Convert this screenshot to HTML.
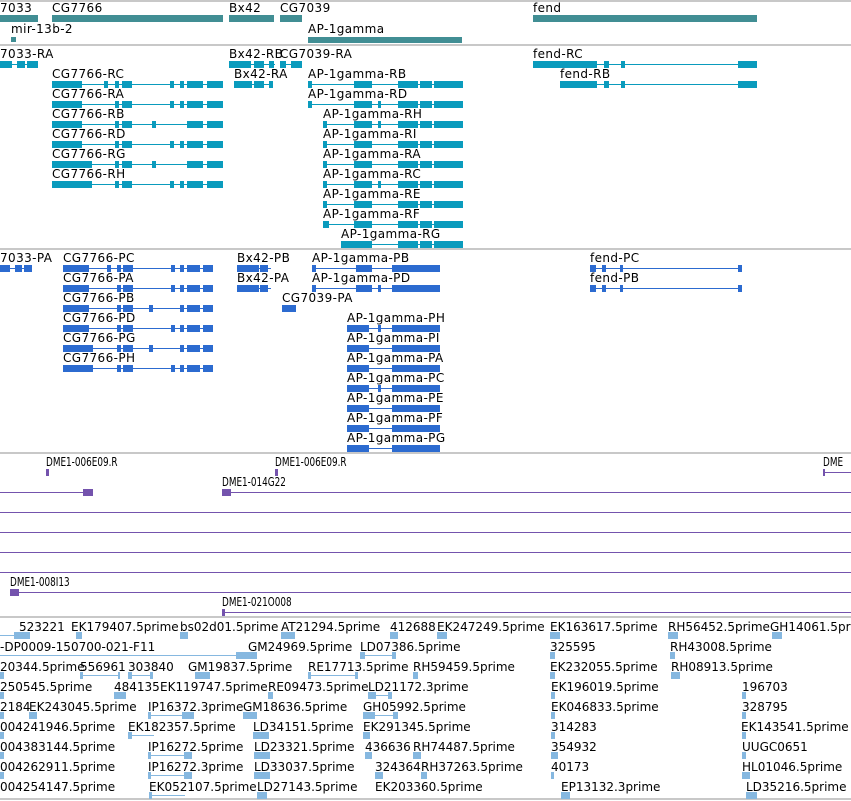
<!DOCTYPE html>
<html><head><meta charset="utf-8"><style>
*{margin:0;padding:0}
html{overflow:hidden;width:851px;height:801px}
body{width:851px;height:801px;background:#fff;position:relative;overflow:hidden;font-family:"DejaVu Sans","Liberation Sans",sans-serif;font-size:12px;color:#000}
div{position:absolute}
.w{left:0;top:0;width:851px;height:801px;overflow:hidden}
.s{left:0;width:851px;height:2px;background:#c8c8c8}
.l{white-space:nowrap;line-height:14px}
.t .l{letter-spacing:0.4px}
.d{white-space:nowrap;line-height:14px;font-family:"DejaVu Sans Condensed","DejaVu Sans",sans-serif;font-size:12px;transform:scaleX(.82);transform-origin:0 0}
.a,.b,.c,.p,.e{height:1px}
.a{background:#0a9bbd}.b{background:#2c6bd0}.p{background:#7453ad}.e{background:#86b8e0}
.a i,.b i,.e i,.p i{position:absolute;top:-3px;height:7px;display:block}
.a i{background:#0a9bbd}.b i{background:#2c6bd0}.e i{background:#86b8e0}.p i{background:#7453ad}
.g{background:#418e94;height:7px}
</style></head><body>
<div class="w">
<div class="s" style="top:0"></div>
<div class="s" style="top:44px"></div>
<div class="s" style="top:248px"></div>
<div class="s" style="top:452px"></div>
<div class="s" style="top:616px"></div>
<div class="s" style="top:798px"></div>

<div class="t w">
<!-- genes -->
<div class="l" style="left:0;top:1px">7033</div><div class="g" style="left:0;top:15px;width:38px"></div>
<div class="l" style="left:52px;top:1px">CG7766</div><div class="g" style="left:52px;top:15px;width:171px"></div>
<div class="l" style="left:229px;top:1px">Bx42</div><div class="g" style="left:229px;top:15px;width:45px"></div>
<div class="l" style="left:280px;top:1px">CG7039</div><div class="g" style="left:280px;top:15px;width:22px"></div>
<div class="l" style="left:533px;top:1px">fend</div><div class="g" style="left:533px;top:15px;width:224px"></div>
<div class="l" style="left:11px;top:22px">mir-13b-2</div><div class="g" style="left:11px;top:37px;width:5px;height:5px"></div>
<div class="l" style="left:308px;top:22px">AP-1gamma</div><div class="g" style="left:308px;top:37px;width:154px;height:6px"></div>

<!-- transcripts R -->
<div class="l" style="left:0;top:47px">7033-RA</div><div class="a" style="left:0;top:64px;width:38px"><i style="left:0;width:12px"></i><i style="left:17px;width:8px"></i><i style="left:27px;width:11px"></i></div>
<div class="l" style="left:229px;top:47px">Bx42-RB</div><div class="a" style="left:229px;top:64px;width:46px"><i style="left:0;width:22px"></i><i style="left:25px;width:10px"></i><i style="left:40px;width:5px"></i></div>
<div class="l" style="left:280px;top:47px">CG7039-RA</div><div class="a" style="left:280px;top:64px;width:22px"><i style="left:0;width:6px"></i><i style="left:11px;width:11px"></i></div>
<div class="l" style="left:533px;top:47px">fend-RC</div><div class="a" style="left:533px;top:64px;width:224px"><i style="left:0;width:64px"></i><i style="left:71px;width:5px"></i><i style="left:88px;width:4px"></i><i style="left:205px;width:19px"></i></div>
<div class="l" style="left:560px;top:67px">fend-RB</div><div class="a" style="left:560px;top:84px;width:197px"><i style="left:0;width:37px"></i><i style="left:44px;width:5px"></i><i style="left:61px;width:4px"></i><i style="left:178px;width:19px"></i></div>
<div class="l" style="left:234px;top:67px">Bx42-RA</div><div class="a" style="left:234px;top:84px;width:39px"><i style="left:0;width:18px"></i><i style="left:20px;width:10px"></i><i style="left:35px;width:4px"></i></div>

<div class="l" style="left:52px;top:67px">CG7766-RC</div><div class="a" style="left:52px;top:84px;width:171px"><i style="left:0;width:30px"></i><i style="left:52px;width:4px"></i><i style="left:63px;width:4px"></i><i style="left:70px;width:10px"></i><i style="left:118px;width:4px"></i><i style="left:128px;width:4px"></i><i style="left:135px;width:16px"></i><i style="left:155px;width:16px"></i></div>
<div class="l" style="left:52px;top:87px">CG7766-RA</div><div class="a" style="left:52px;top:104px;width:171px"><i style="left:0;width:30px"></i><i style="left:63px;width:4px"></i><i style="left:70px;width:10px"></i><i style="left:118px;width:4px"></i><i style="left:128px;width:4px"></i><i style="left:135px;width:16px"></i><i style="left:155px;width:16px"></i></div>
<div class="l" style="left:52px;top:107px">CG7766-RB</div><div class="a" style="left:52px;top:124px;width:171px"><i style="left:0;width:30px"></i><i style="left:63px;width:4px"></i><i style="left:70px;width:10px"></i><i style="left:100px;width:4px"></i><i style="left:135px;width:16px"></i><i style="left:155px;width:16px"></i></div>
<div class="l" style="left:52px;top:127px">CG7766-RD</div><div class="a" style="left:52px;top:144px;width:171px"><i style="left:0;width:30px"></i><i style="left:63px;width:4px"></i><i style="left:70px;width:10px"></i><i style="left:118px;width:4px"></i><i style="left:128px;width:4px"></i><i style="left:135px;width:16px"></i><i style="left:155px;width:16px"></i></div>
<div class="l" style="left:52px;top:147px">CG7766-RG</div><div class="a" style="left:52px;top:164px;width:171px"><i style="left:0;width:40px"></i><i style="left:63px;width:4px"></i><i style="left:70px;width:10px"></i><i style="left:100px;width:4px"></i><i style="left:135px;width:16px"></i><i style="left:155px;width:16px"></i></div>
<div class="l" style="left:52px;top:167px">CG7766-RH</div><div class="a" style="left:52px;top:184px;width:171px"><i style="left:0;width:40px"></i><i style="left:63px;width:4px"></i><i style="left:70px;width:10px"></i><i style="left:118px;width:4px"></i><i style="left:128px;width:4px"></i><i style="left:135px;width:16px"></i><i style="left:155px;width:16px"></i></div>

<div class="l" style="left:308px;top:67px">AP-1gamma-RB</div><div class="a" style="left:308px;top:84px;width:155px"><i style="left:0;width:4px"></i><i style="left:46px;width:18px"></i><i style="left:90px;width:20px"></i><i style="left:112px;width:12px"></i><i style="left:126px;width:29px"></i></div>
<div class="l" style="left:308px;top:87px">AP-1gamma-RD</div><div class="a" style="left:308px;top:104px;width:155px"><i style="left:0;width:4px"></i><i style="left:46px;width:18px"></i><i style="left:70px;width:3px"></i><i style="left:90px;width:20px"></i><i style="left:112px;width:12px"></i><i style="left:126px;width:29px"></i></div>
<div class="l" style="left:323px;top:107px">AP-1gamma-RH</div><div class="a" style="left:323px;top:124px;width:140px"><i style="left:0;width:4px"></i><i style="left:31px;width:18px"></i><i style="left:55px;width:3px"></i><i style="left:75px;width:20px"></i><i style="left:97px;width:12px"></i><i style="left:111px;width:29px"></i></div>
<div class="l" style="left:323px;top:127px">AP-1gamma-RI</div><div class="a" style="left:323px;top:144px;width:140px"><i style="left:0;width:4px"></i><i style="left:31px;width:18px"></i><i style="left:75px;width:20px"></i><i style="left:97px;width:12px"></i><i style="left:111px;width:29px"></i></div>
<div class="l" style="left:323px;top:147px">AP-1gamma-RA</div><div class="a" style="left:323px;top:164px;width:140px"><i style="left:0;width:4px"></i><i style="left:31px;width:18px"></i><i style="left:75px;width:20px"></i><i style="left:97px;width:12px"></i><i style="left:111px;width:29px"></i></div>
<div class="l" style="left:323px;top:167px">AP-1gamma-RC</div><div class="a" style="left:323px;top:184px;width:140px"><i style="left:0;width:4px"></i><i style="left:31px;width:18px"></i><i style="left:55px;width:3px"></i><i style="left:75px;width:20px"></i><i style="left:97px;width:12px"></i><i style="left:111px;width:29px"></i></div>
<div class="l" style="left:323px;top:187px">AP-1gamma-RE</div><div class="a" style="left:323px;top:204px;width:140px"><i style="left:0;width:4px"></i><i style="left:31px;width:18px"></i><i style="left:75px;width:20px"></i><i style="left:97px;width:12px"></i><i style="left:111px;width:29px"></i></div>
<div class="l" style="left:323px;top:207px">AP-1gamma-RF</div><div class="a" style="left:323px;top:224px;width:140px"><i style="left:0;width:6px"></i><i style="left:31px;width:18px"></i><i style="left:75px;width:20px"></i><i style="left:97px;width:12px"></i><i style="left:111px;width:29px"></i></div>
<div class="l" style="left:341px;top:227px">AP-1gamma-RG</div><div class="a" style="left:341px;top:244px;width:122px"><i style="left:0;width:31px"></i><i style="left:57px;width:20px"></i><i style="left:79px;width:12px"></i><i style="left:93px;width:29px"></i></div>

<!-- transcripts P -->
<div class="l" style="left:0;top:251px">7033-PA</div><div class="b" style="left:0;top:268px;width:32px"><i style="left:0;width:10px"></i><i style="left:15px;width:7px"></i><i style="left:24px;width:8px"></i></div>
<div class="l" style="left:237px;top:251px">Bx42-PB</div><div class="b" style="left:237px;top:268px;width:34px"><i style="left:0;width:22px"></i><i style="left:23px;width:8px"></i></div>
<div class="l" style="left:237px;top:271px">Bx42-PA</div><div class="b" style="left:237px;top:288px;width:34px"><i style="left:0;width:22px"></i><i style="left:23px;width:8px"></i></div>
<div class="l" style="left:282px;top:291px">CG7039-PA</div><div class="b" style="left:282px;top:308px;width:14px"><i style="left:0;width:14px"></i></div>
<div class="l" style="left:590px;top:251px">fend-PC</div><div class="b" style="left:590px;top:268px;width:152px"><i style="left:0;width:6px"></i><i style="left:12px;width:4px"></i><i style="left:30px;width:3px"></i><i style="left:148px;width:4px"></i></div>
<div class="l" style="left:590px;top:271px">fend-PB</div><div class="b" style="left:590px;top:288px;width:152px"><i style="left:0;width:6px"></i><i style="left:12px;width:4px"></i><i style="left:30px;width:3px"></i><i style="left:148px;width:4px"></i></div>

<div class="l" style="left:63px;top:251px">CG7766-PC</div><div class="b" style="left:63px;top:268px;width:150px"><i style="left:0;width:26px"></i><i style="left:44px;width:4px"></i><i style="left:54px;width:4px"></i><i style="left:60px;width:10px"></i><i style="left:108px;width:4px"></i><i style="left:117px;width:4px"></i><i style="left:124px;width:13px"></i><i style="left:140px;width:10px"></i></div>
<div class="l" style="left:63px;top:271px">CG7766-PA</div><div class="b" style="left:63px;top:288px;width:150px"><i style="left:0;width:26px"></i><i style="left:54px;width:4px"></i><i style="left:60px;width:10px"></i><i style="left:108px;width:4px"></i><i style="left:117px;width:4px"></i><i style="left:124px;width:13px"></i><i style="left:140px;width:10px"></i></div>
<div class="l" style="left:63px;top:291px">CG7766-PB</div><div class="b" style="left:63px;top:308px;width:150px"><i style="left:0;width:26px"></i><i style="left:54px;width:4px"></i><i style="left:60px;width:10px"></i><i style="left:86px;width:4px"></i><i style="left:117px;width:4px"></i><i style="left:124px;width:13px"></i><i style="left:140px;width:10px"></i></div>
<div class="l" style="left:63px;top:311px">CG7766-PD</div><div class="b" style="left:63px;top:328px;width:150px"><i style="left:0;width:26px"></i><i style="left:54px;width:4px"></i><i style="left:60px;width:10px"></i><i style="left:108px;width:4px"></i><i style="left:117px;width:4px"></i><i style="left:124px;width:13px"></i><i style="left:140px;width:10px"></i></div>
<div class="l" style="left:63px;top:331px">CG7766-PG</div><div class="b" style="left:63px;top:348px;width:150px"><i style="left:0;width:30px"></i><i style="left:54px;width:4px"></i><i style="left:60px;width:10px"></i><i style="left:86px;width:4px"></i><i style="left:117px;width:4px"></i><i style="left:124px;width:13px"></i><i style="left:140px;width:10px"></i></div>
<div class="l" style="left:63px;top:351px">CG7766-PH</div><div class="b" style="left:63px;top:368px;width:150px"><i style="left:0;width:30px"></i><i style="left:54px;width:4px"></i><i style="left:60px;width:10px"></i><i style="left:108px;width:4px"></i><i style="left:117px;width:4px"></i><i style="left:124px;width:13px"></i><i style="left:140px;width:10px"></i></div>

<div class="l" style="left:312px;top:251px">AP-1gamma-PB</div><div class="b" style="left:312px;top:268px;width:128px"><i style="left:0;width:4px"></i><i style="left:44px;width:16px"></i><i style="left:80px;width:48px"></i></div>
<div class="l" style="left:312px;top:271px">AP-1gamma-PD</div><div class="b" style="left:312px;top:288px;width:128px"><i style="left:0;width:4px"></i><i style="left:44px;width:16px"></i><i style="left:66px;width:3px"></i><i style="left:80px;width:48px"></i></div>
<div class="l" style="left:347px;top:311px">AP-1gamma-PH</div><div class="b" style="left:347px;top:328px;width:93px"><i style="left:0;width:22px"></i><i style="left:31px;width:3px"></i><i style="left:45px;width:48px"></i></div>
<div class="l" style="left:347px;top:331px">AP-1gamma-PI</div><div class="b" style="left:347px;top:348px;width:93px"><i style="left:0;width:22px"></i><i style="left:45px;width:48px"></i></div>
<div class="l" style="left:347px;top:351px">AP-1gamma-PA</div><div class="b" style="left:347px;top:368px;width:93px"><i style="left:0;width:22px"></i><i style="left:45px;width:48px"></i></div>
<div class="l" style="left:347px;top:371px">AP-1gamma-PC</div><div class="b" style="left:347px;top:388px;width:93px"><i style="left:0;width:22px"></i><i style="left:31px;width:3px"></i><i style="left:45px;width:48px"></i></div>
<div class="l" style="left:347px;top:391px">AP-1gamma-PE</div><div class="b" style="left:347px;top:408px;width:93px"><i style="left:0;width:22px"></i><i style="left:45px;width:48px"></i></div>
<div class="l" style="left:347px;top:411px">AP-1gamma-PF</div><div class="b" style="left:347px;top:428px;width:93px"><i style="left:0;width:22px"></i><i style="left:45px;width:48px"></i></div>
<div class="l" style="left:347px;top:431px">AP-1gamma-PG</div><div class="b" style="left:347px;top:448px;width:93px"><i style="left:0;width:22px"></i><i style="left:45px;width:48px"></i></div>
</div>

<!-- DME -->
<div class="d" style="left:46px;top:455px">DME1-006E09.R</div><div class="p" style="left:46px;top:472px;width:3px"><i style="left:0;width:3px"></i></div>
<div class="d" style="left:275px;top:455px">DME1-006E09.R</div><div class="p" style="left:275px;top:472px;width:3px"><i style="left:0;width:3px"></i></div>
<div class="d" style="left:823px;top:455px">DME</div><div class="p" style="left:823px;top:472px;width:28px"><i style="left:0;width:2px"></i></div>
<div class="p" style="left:0;top:492px;width:93px"><i style="left:83px;width:10px"></i></div>
<div class="d" style="left:222px;top:475px">DME1-014G22</div><div class="p" style="left:222px;top:492px;width:629px"><i style="left:0;width:9px"></i></div>
<div class="p" style="left:0;top:512px;width:851px"></div>
<div class="p" style="left:0;top:532px;width:851px"></div>
<div class="p" style="left:0;top:552px;width:851px"></div>
<div class="p" style="left:0;top:572px;width:851px"></div>
<div class="d" style="left:10px;top:575px">DME1-008I13</div><div class="p" style="left:10px;top:592px;width:841px"><i style="left:0;width:9px"></i></div>
<div class="d" style="left:222px;top:595px">DME1-021O008</div><div class="p" style="left:222px;top:612px;width:629px"><i style="left:0;width:3px"></i></div>

<!-- ESTs -->
<div class="l" style="left:19px;top:620px">523221</div>
<div class="l" style="left:71px;top:620px">EK179407.5prime</div>
<div class="l" style="left:180px;top:620px">bs02d01.5prime</div>
<div class="l" style="left:281px;top:620px">AT21294.5prime</div>
<div class="l" style="left:390px;top:620px">412688</div>
<div class="l" style="left:437px;top:620px">EK247249.5prime</div>
<div class="l" style="left:550px;top:620px">EK163617.5prime</div>
<div class="l" style="left:668px;top:620px">RH56452.5prime</div>
<div class="l" style="left:770px;top:620px">GH14061.5prime</div>
<div class="l" style="left:0;top:640px">-DP0009-150700-021-F11</div>
<div class="l" style="left:248px;top:640px">GM24969.5prime</div>
<div class="l" style="left:360px;top:640px">LD07386.5prime</div>
<div class="l" style="left:550px;top:640px">325595</div>
<div class="l" style="left:670px;top:640px">RH43008.5prime</div>
<div class="l" style="left:0;top:660px">20344.5prime</div>
<div class="l" style="left:80px;top:660px">556961</div>
<div class="l" style="left:128px;top:660px">303840</div>
<div class="l" style="left:188px;top:660px">GM19837.5prime</div>
<div class="l" style="left:308px;top:660px">RE17713.5prime</div>
<div class="l" style="left:413px;top:660px">RH59459.5prime</div>
<div class="l" style="left:550px;top:660px">EK232055.5prime</div>
<div class="l" style="left:671px;top:660px">RH08913.5prime</div>
<div class="l" style="left:0;top:680px">250545.5prime</div>
<div class="l" style="left:114px;top:680px">484135</div>
<div class="l" style="left:160px;top:680px">EK119747.5prime</div>
<div class="l" style="left:268px;top:680px">RE09473.5prime</div>
<div class="l" style="left:368px;top:680px">LD21172.3prime</div>
<div class="l" style="left:551px;top:680px">EK196019.5prime</div>
<div class="l" style="left:742px;top:680px">196703</div>
<div class="l" style="left:0;top:700px">2184</div>
<div class="l" style="left:29px;top:700px">EK243045.5prime</div>
<div class="l" style="left:148px;top:700px">IP16372.3prime</div>
<div class="l" style="left:243px;top:700px">GM18636.5prime</div>
<div class="l" style="left:363px;top:700px">GH05992.5prime</div>
<div class="l" style="left:551px;top:700px">EK046833.5prime</div>
<div class="l" style="left:742px;top:700px">328795</div>
<div class="l" style="left:0;top:720px">004241946.5prime</div>
<div class="l" style="left:128px;top:720px">EK182357.5prime</div>
<div class="l" style="left:253px;top:720px">LD34151.5prime</div>
<div class="l" style="left:363px;top:720px">EK291345.5prime</div>
<div class="l" style="left:551px;top:720px">314283</div>
<div class="l" style="left:741px;top:720px">EK143541.5prime</div>
<div class="l" style="left:0;top:740px">004383144.5prime</div>
<div class="l" style="left:148px;top:740px">IP16272.5prime</div>
<div class="l" style="left:254px;top:740px">LD23321.5prime</div>
<div class="l" style="left:365px;top:740px">436636</div>
<div class="l" style="left:413px;top:740px">RH74487.5prime</div>
<div class="l" style="left:551px;top:740px">354932</div>
<div class="l" style="left:742px;top:740px">UUGC0651</div>
<div class="l" style="left:0;top:760px">004262911.5prime</div>
<div class="l" style="left:148px;top:760px">IP16272.3prime</div>
<div class="l" style="left:254px;top:760px">LD33037.5prime</div>
<div class="l" style="left:375px;top:760px">324364</div>
<div class="l" style="left:421px;top:760px">RH37263.5prime</div>
<div class="l" style="left:551px;top:760px">40173</div>
<div class="l" style="left:742px;top:760px">HL01046.5prime</div>
<div class="l" style="left:0;top:780px">004254147.5prime</div>
<div class="l" style="left:149px;top:780px">EK052107.5prime</div>
<div class="l" style="left:257px;top:780px">LD27143.5prime</div>
<div class="l" style="left:375px;top:780px">EK203360.5prime</div>
<div class="l" style="left:561px;top:780px">EP13132.3prime</div>
<div class="l" style="left:746px;top:780px">LD35216.5prime</div>

<!-- EST glyphs -->
<div class="e" style="left:0;top:635px;width:30px"><i style="left:14px;width:16px"></i></div>
<div class="e" style="left:76px;top:635px;width:6px"><i style="left:0;width:6px"></i></div>
<div class="e" style="left:180px;top:635px;width:8px"><i style="left:0;width:8px"></i></div>
<div class="e" style="left:281px;top:635px;width:14px"><i style="left:0;width:14px"></i></div>
<div class="e" style="left:390px;top:635px;width:8px"><i style="left:0;width:8px"></i></div>
<div class="e" style="left:437px;top:635px;width:10px"><i style="left:0;width:10px"></i></div>
<div class="e" style="left:550px;top:635px;width:10px"><i style="left:0;width:10px"></i></div>
<div class="e" style="left:668px;top:635px;width:10px"><i style="left:0;width:10px"></i></div>
<div class="e" style="left:772px;top:635px;width:10px"><i style="left:0;width:10px"></i></div>
<div class="e" style="left:0;top:655px;width:257px"><i style="left:236px;width:21px"></i></div>
<div class="e" style="left:360px;top:655px;width:36px"><i style="left:0;width:5px"></i><i style="left:32px;width:4px"></i></div>
<div class="e" style="left:550px;top:655px;width:5px"><i style="left:0;width:5px"></i></div>
<div class="e" style="left:670px;top:655px;width:5px"><i style="left:0;width:5px"></i></div>
<div class="e" style="left:0;top:675px;width:4px"><i style="left:0;width:4px"></i></div>
<div class="e" style="left:80px;top:675px;width:40px"><i style="left:0;width:3px"></i><i style="left:38px;width:2px"></i></div>
<div class="e" style="left:128px;top:675px;width:25px"><i style="left:0;width:4px"></i><i style="left:22px;width:3px"></i></div>
<div class="e" style="left:195px;top:675px;width:15px"><i style="left:0;width:15px"></i></div>
<div class="e" style="left:308px;top:675px;width:50px"><i style="left:0;width:3px"></i><i style="left:47px;width:3px"></i></div>
<div class="e" style="left:413px;top:675px;width:5px"><i style="left:0;width:5px"></i></div>
<div class="e" style="left:550px;top:675px;width:5px"><i style="left:0;width:5px"></i></div>
<div class="e" style="left:671px;top:675px;width:9px"><i style="left:0;width:9px"></i></div>
<div class="e" style="left:0;top:695px;width:4px"><i style="left:0;width:4px"></i></div>
<div class="e" style="left:114px;top:695px;width:12px"><i style="left:0;width:12px"></i></div>
<div class="e" style="left:268px;top:695px;width:5px"><i style="left:0;width:5px"></i></div>
<div class="e" style="left:368px;top:695px;width:24px"><i style="left:0;width:8px"></i><i style="left:20px;width:4px"></i></div>
<div class="e" style="left:551px;top:695px;width:4px"><i style="left:0;width:4px"></i></div>
<div class="e" style="left:742px;top:695px;width:4px"><i style="left:0;width:4px"></i></div>
<div class="e" style="left:0;top:715px;width:4px"><i style="left:0;width:4px"></i></div>
<div class="e" style="left:29px;top:715px;width:8px"><i style="left:0;width:8px"></i></div>
<div class="e" style="left:148px;top:715px;width:46px"><i style="left:0;width:3px"></i><i style="left:34px;width:12px"></i></div>
<div class="e" style="left:243px;top:715px;width:14px"><i style="left:0;width:14px"></i></div>
<div class="e" style="left:363px;top:715px;width:35px"><i style="left:0;width:12px"></i><i style="left:30px;width:5px"></i></div>
<div class="e" style="left:551px;top:715px;width:4px"><i style="left:0;width:4px"></i></div>
<div class="e" style="left:742px;top:715px;width:4px"><i style="left:0;width:4px"></i></div>
<div class="e" style="left:0;top:735px;width:4px"><i style="left:0;width:4px"></i></div>
<div class="e" style="left:128px;top:735px;width:26px"><i style="left:0;width:4px"></i></div>
<div class="e" style="left:253px;top:735px;width:16px"><i style="left:0;width:16px"></i></div>
<div class="e" style="left:363px;top:735px;width:7px"><i style="left:0;width:7px"></i></div>
<div class="e" style="left:551px;top:735px;width:4px"><i style="left:0;width:4px"></i></div>
<div class="e" style="left:742px;top:735px;width:4px"><i style="left:0;width:4px"></i></div>
<div class="e" style="left:0;top:755px;width:4px"><i style="left:0;width:4px"></i></div>
<div class="e" style="left:148px;top:755px;width:44px"><i style="left:0;width:3px"></i><i style="left:36px;width:8px"></i></div>
<div class="e" style="left:254px;top:755px;width:16px"><i style="left:0;width:16px"></i></div>
<div class="e" style="left:365px;top:755px;width:7px"><i style="left:0;width:7px"></i></div>
<div class="e" style="left:413px;top:755px;width:8px"><i style="left:0;width:8px"></i></div>
<div class="e" style="left:551px;top:755px;width:7px"><i style="left:0;width:7px"></i></div>
<div class="e" style="left:742px;top:755px;width:4px"><i style="left:0;width:4px"></i></div>
<div class="e" style="left:0;top:775px;width:4px"><i style="left:0;width:4px"></i></div>
<div class="e" style="left:148px;top:775px;width:44px"><i style="left:0;width:3px"></i><i style="left:36px;width:8px"></i></div>
<div class="e" style="left:254px;top:775px;width:16px"><i style="left:0;width:16px"></i></div>
<div class="e" style="left:375px;top:775px;width:8px"><i style="left:0;width:8px"></i></div>
<div class="e" style="left:421px;top:775px;width:6px"><i style="left:0;width:6px"></i></div>
<div class="e" style="left:551px;top:775px;width:3px"><i style="left:0;width:3px"></i></div>
<div class="e" style="left:742px;top:775px;width:8px"><i style="left:0;width:8px"></i></div>
<div class="e" style="left:149px;top:795px;width:36px"><i style="left:0;width:3px"></i></div>
<div class="e" style="left:257px;top:795px;width:10px"><i style="left:0;width:10px"></i></div>
<div class="e" style="left:561px;top:795px;width:9px"><i style="left:0;width:9px"></i></div>
<div class="e" style="left:746px;top:795px;width:11px"><i style="left:0;width:11px"></i></div>
</div>
</body></html>
